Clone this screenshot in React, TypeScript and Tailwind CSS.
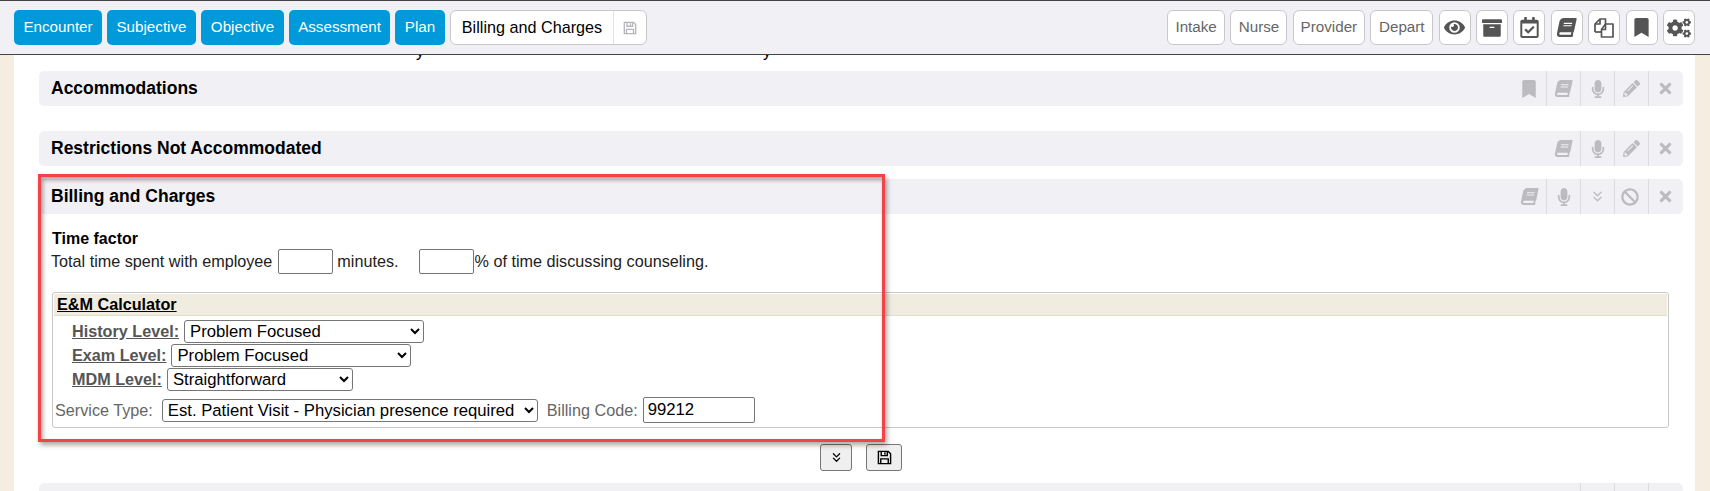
import type { ReactNode } from "react";
import {
    FaArchive,
    FaBan,
    FaBook,
    FaBookmark,
    FaCogs,
    FaEye,
    FaMicrophone,
    FaPencilAlt,
    FaRegCalendarCheck,
    FaTimes,
} from "react-icons/fa";
import { ChevronsDown } from "lucide-react";

const font = "font-['Liberation_Sans',Arial,sans-serif]";

function FloppyIcon({ size }: { size: number }) {
    return (
        <svg width={size} height={size} viewBox="0 0 16 16" fill="none" stroke="currentColor" strokeWidth="1.5">
            <path d="M1.5 1.5h10.5l2.5 2.5v10.5h-13z" />
            <path d="M4.5 1.5v4.5h6.5v-4.5" />
            <path d="M8.5 2.5v2.5" />
            <path d="M4 14.5v-5h8v5" />
        </svg>
    );
}

function FilesIcon() {
    return (
        <svg width="22" height="22" viewBox="0 0 22 22" fill="none" stroke="#555" strokeWidth="1.7" strokeLinejoin="round">
            <path d="M2 15V7l5-5h5.5v5" />
            <path d="M7 2v5H2" />
            <path d="M2 15h6" />
            <path d="M8.500 12.500l4-5.500h7.500v13h-11.500z" />
            <path d="M12.500 7v5.500h-4" />
        </svg>
    );
}

function NavButton({ label, width }: { label: string; width: string }) {
    return (
        <button className={`${width} h-[35px] rounded-[5px] bg-[#0099da] text-[15.2px] text-white flex items-center justify-center`}>
            {label}
        </button>
    );
}

function ToolButton({ children, width = "w-[32px]" }: { children: ReactNode; width?: string }) {
    return (
        <button className={`${width} h-[35px] rounded-[6px] border border-[#c8c8cc] bg-white text-[15.2px] text-[#666] flex items-center justify-center`}>
            {children}
        </button>
    );
}

function PanelHeader({ title, icons }: { title: string; icons: ReactNode[] }) {
    return (
        <div className="h-[35px] rounded-[5px] bg-[#f0f0f5] flex items-center justify-between pl-[12px]">
            <h3 className="text-[17.5px] font-bold text-black">{title}</h3>
            <div className="flex h-full pr-[1px]">
                {icons.map((icon, i) => (
                    <div
                        key={i}
                        className={`w-[34px] h-full flex items-center justify-center text-[#bbbbc0] text-[17px] ${i > 0 ? "border-l border-[#dcdce0]" : ""}`}
                    >
                        {icon}
                    </div>
                ))}
            </div>
        </div>
    );
}

function LevelRow({ label, value, width }: { label: string; value: string; width: string }) {
    return (
        <div className="h-[24px] flex items-center pl-[18px] gap-[5px]">
            <span className="font-bold text-[#555] underline">{label}</span>
            <select className={`${width} h-[23px] rounded-[3px] border border-[#767676] bg-white pl-[1px] text-[16.7px] text-black`} defaultValue={value}>
                <option>{value}</option>
            </select>
        </div>
    );
}

export default function App() {
    const sectionIcons = [
        <FaBook key="b" className="-skew-x-12" />,
        <FaMicrophone key="m" className="text-[18px]" />,
        <FaPencilAlt key="p" />,
        <FaTimes key="x" />,
    ];

    return (
        <div className={`${font} w-[1710px] h-[491px] overflow-hidden bg-[#f5eddf] text-[16.2px] flex flex-col`}>
            <header className="relative z-10 h-[55px] shrink-0 bg-[#f0f0f5] border-y border-[#444] pl-[14px] pr-[15px] flex items-center justify-between">
                <div className="flex items-center gap-[5px]">
                    <NavButton label="Encounter" width="w-[88px]" />
                    <NavButton label="Subjective" width="w-[89px]" />
                    <NavButton label="Objective" width="w-[83px]" />
                    <NavButton label="Assessment" width="w-[101px]" />
                    <NavButton label="Plan" width="w-[50px]" />
                    <div className="w-[197px] h-[35px] rounded-[6px] border border-[#c8c8cc] bg-white flex items-center">
                        <span className="w-[162px] text-center text-black">Billing and Charges</span>
                        <span className="flex-1 h-full border-l border-[#e4e4e8] flex items-center justify-center text-[#b5b5ba]">
                            <FloppyIcon size={14} />
                        </span>
                    </div>
                </div>
                <div className="flex items-center gap-[5.4px]">
                    <ToolButton width="w-[58px]">Intake</ToolButton>
                    <ToolButton width="w-[57px]">Nurse</ToolButton>
                    <ToolButton width="w-[72px]">Provider</ToolButton>
                    <ToolButton width="w-[63px]">Depart</ToolButton>
                    <ToolButton><FaEye className="text-[#555] text-[21px]" /></ToolButton>
                    <ToolButton><FaArchive className="text-[#555] text-[20px]" /></ToolButton>
                    <ToolButton><FaRegCalendarCheck className="text-[#555] text-[21px]" /></ToolButton>
                    <ToolButton><FaBook className="text-[#555] text-[19px] -skew-x-12" /></ToolButton>
                    <ToolButton><FilesIcon /></ToolButton>
                    <ToolButton><FaBookmark className="text-[#555] text-[19px]" /></ToolButton>
                    <ToolButton><FaCogs className="text-[#555] text-[24px]" /></ToolButton>
                </div>
            </header>

            <main className="relative mx-[14px] mr-[15px] flex-1 bg-white px-[25px] pr-[12px] pt-[16px]">
                {/* line scrolled under the header, only the descenders stay visible */}
                <span className="absolute left-[402px] top-[-16px] text-black">y</span>
                <span className="absolute left-[749px] top-[-16px] text-black">y</span>

                <PanelHeader
                    title="Accommodations"
                    icons={[<FaBookmark key="k" className="text-[18px]" />, ...sectionIcons]}
                />
                <div className="mt-[25px]">
                    <PanelHeader title="Restrictions Not Accommodated" icons={sectionIcons} />
                </div>
                <div className="mt-[13px]">
                    <PanelHeader
                        title="Billing and Charges"
                        icons={[
                            <FaBook key="b" className="-skew-x-12" />,
                            <FaMicrophone key="m" className="text-[18px]" />,
                            <ChevronsDown key="d" size={17} strokeWidth={1.75} />,
                            <FaBan key="n" className="text-[18px] -ml-[3px]" />,
                            <FaTimes key="x" />,
                        ]}
                    />
                </div>

                <div className="pl-[13px] pr-[14px]">
                    <div className="mt-[15px] h-[20px] text-[16px] font-bold text-black leading-[20px]">Time factor</div>
                    <div className="-ml-[1px] flex items-center text-[#222] h-[25px]">
                        <span>Total time spent with employee</span>
                        <input className="ml-[6px] w-[55px] h-[25px] rounded-[2px] border border-[#767676] bg-white" />
                        <span className="ml-[4px]">minutes.</span>
                        <input className="ml-[20px] w-[55px] h-[25px] rounded-[2px] border border-[#767676] bg-white" />
                        <span className="ml-[1px]">% of time discussing counseling.</span>
                    </div>

                    <div className="mt-[18px] h-[136px] rounded-[3px] border border-[#c8c8c8] p-[1px]">
                        <div className="h-[22px] bg-[#f0ecdf] border-b border-[#e0ddc8] pl-[3px] font-bold text-black underline leading-[21px]">
                            E&amp;M Calculator
                        </div>
                        <div className="pt-[3px]">
                            <LevelRow label="History Level:" value="Problem Focused" width="w-[240px]" />
                            <LevelRow label="Exam Level:" value="Problem Focused" width="w-[240px]" />
                            <LevelRow label="MDM Level:" value="Straightforward" width="w-[186px]" />
                        </div>
                        <div className="mt-[6px] flex items-center pl-[1px] text-[#666]">
                            <span>Service Type:</span>
                            <select className="ml-[9px] w-[376px] h-[23px] rounded-[3px] border border-[#767676] bg-white pl-[1px] text-[16.7px] text-black" defaultValue="est">
                                <option value="est">Est. Patient Visit - Physician presence required</option>
                            </select>
                            <span className="ml-[9px]">Billing Code:</span>
                            <input
                                className="ml-[5px] w-[112px] h-[26px] rounded-[2px] border border-[#767676] bg-white px-[4px] text-[16.7px] text-black"
                                defaultValue="99212"
                            />
                        </div>
                    </div>
                </div>

                <div className="mt-[16px] flex justify-center gap-[14px]">
                    <button className="w-[32px] h-[27px] rounded-[3px] border border-[#767676] bg-[#efefef] flex items-center justify-center text-black">
                        <ChevronsDown size={15} strokeWidth={2} />
                    </button>
                    <button className="w-[36px] h-[27px] rounded-[3px] border border-[#767676] bg-[#efefef] flex items-center justify-center text-black">
                        <FloppyIcon size={15} />
                    </button>
                </div>

                <div className="mt-[12px]">
                    <PanelHeader title="" icons={sectionIcons} />
                </div>

                {/* annotation drawn over the screenshot */}
                <div className="absolute left-[24px] top-[119px] w-[847px] h-[268px] border-[3.5px] border-[#f44346] pointer-events-none shadow-[2px_3px_5px_rgba(0,0,0,0.35),inset_2px_3px_4px_rgba(0,0,0,0.35)]" />
            </main>
        </div>
    );
}
